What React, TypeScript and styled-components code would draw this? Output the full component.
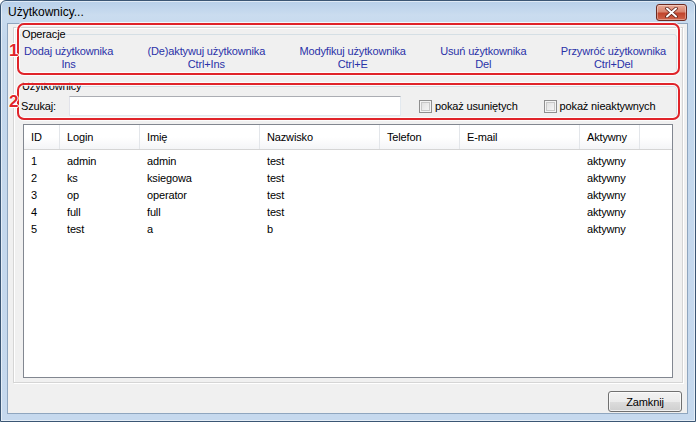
import React from "react";
import styled, { createGlobalStyle } from "styled-components";

const GlobalStyle = createGlobalStyle`
  html, body {
    margin: 0;
    padding: 0;
    background: #fff;
  }
  body {
    font-family: "Liberation Sans", Arial, sans-serif;
    font-size: 11px;
    letter-spacing: -0.15px;
    color: #000;
  }
`;

/* ------------------ Window frame ------------------ */

const Window = styled.div`
  box-sizing: border-box;
  width: 696px;
  height: 422px;
  border: 1px solid #3b5674;
  border-radius: 6px 6px 0 0;
  padding: 0 7px 7px 6px;
  background: linear-gradient(to bottom, #b7cfe9 0px, #cadcef 14px, #c3d7ec 40px, #c6d9ee 100%);
  display: flex;
  flex-direction: column;
  box-shadow: inset 0 0 0 1px rgba(255, 255, 255, 0.55);
`;

const TitleBar = styled.div`
  height: 22px;
  display: flex;
  align-items: flex-start;
  justify-content: space-between;
`;

const Title = styled.span`
  font-family: "Liberation Sans", Arial, sans-serif;
  font-size: 12px;
  letter-spacing: 0;
  line-height: 22px;
  padding-left: 1px;
  color: #000;
`;

const CloseButton = styled.div`
  box-sizing: border-box;
  width: 31px;
  height: 17px;
  margin-top: 3px;
  margin-right: 1px;
  border: 1px solid #6e2a20;
  border-radius: 3px;
  background: linear-gradient(to bottom, #e9a996 0%, #d98670 45%, #c1442c 55%, #d0644a 100%);
  box-shadow: inset 0 0 0 1px rgba(255, 255, 255, 0.35);
  display: flex;
  align-items: center;
  justify-content: center;
`;

const Client = styled.div`
  position: relative;
  flex: 1;
  display: flex;
  flex-direction: column;
  background: #f0f0f0;
  border: 1px solid #8fa6bf;
`;

/* ------------------ Panel and group boxes ------------------ */

const Panel = styled.div`
  flex: 1;
  display: flex;
  flex-direction: column;
  margin: 3px 4px 0 5px;
  padding: 0 5px 4px 5px;
  border: 1px solid #d5d5d5;
  box-shadow: inset 1px 1px 0 #fff, 1px 1px 0 #fff;
`;

const Group = styled.fieldset<{ gap?: number }>`
  margin: ${(p) => p.gap ?? 0}px 0 0 0;
  padding: 0 10px 2px 0;
  border: 1px solid #d5dfe5;
  border-radius: 3px;
  min-width: 0;
`;

const Legend = styled.legend`
  padding: 0 1px;
  margin-left: 1px;
  font-size: 11px;
  line-height: 13px;
  color: #000;
`;

const LinkRow = styled.div`
  display: flex;
  justify-content: space-between;
  padding: 4px 0 0 4px;
`;

const Operation = styled.div`
  display: flex;
  flex-direction: column;
  align-items: center;
  color: #2a32a8;
  line-height: 13px;
  cursor: pointer;
`;

const SearchRow = styled.div`
  display: flex;
  align-items: center;
  height: 20px;
  padding: 3px 0 1px 1px;
`;

const SearchLabel = styled.span`
  width: 48px;
`;

const SearchInput = styled.div`
  box-sizing: border-box;
  width: 332px;
  height: 20px;
  background: #fff;
  border: 1px solid #e3e9ef;
  border-top-color: #abadb3;
  border-left-color: #e2e3ea;
`;

const CheckLabel = styled.label<{ gap: number }>`
  display: flex;
  align-items: center;
  margin-left: ${(p) => p.gap}px;
  gap: 3px;
`;

const CheckBox = styled.span`
  box-sizing: border-box;
  width: 13px;
  height: 13px;
  border: 1px solid #8f8f8f;
  box-shadow: inset 0 0 0 1px #f4f4f4, inset 0 0 0 2px #c8c8c8;
  background-image: linear-gradient(135deg, #dcdcdc, #fbfbfb);
`;

/* ------------------ List view ------------------ */

const COLS = "36px 80px 120px 120px 80px 120px 60px 1fr";

const List = styled.div`
  flex: 1;
  margin: 4px 4px 0 4px;
  background: #fff;
  border: 1px solid #828790;
  display: flex;
  flex-direction: column;
`;

const HeaderRow = styled.div`
  display: grid;
  grid-template-columns: ${COLS};
  height: 24px;
  background: linear-gradient(to bottom, #ffffff 0%, #ffffff 50%, #f4f5f7 100%);
  border-bottom: 1px solid #d5d5d5;
`;

const HeaderCell = styled.div<{ last?: boolean }>`
  display: flex;
  align-items: center;
  padding-left: 7px;
  border-right: ${(p) => (p.last ? "none" : "1px solid #e3e6ea")};
`;

const Body = styled.div`
  padding-top: 2px;
`;

const Row = styled.div`
  display: grid;
  grid-template-columns: ${COLS};
  height: 17px;
  align-items: center;
`;

const Cell = styled.div`
  padding-left: 7px;
  white-space: nowrap;
`;

/* ------------------ Footer ------------------ */

const Footer = styled.div`
  display: flex;
  justify-content: flex-end;
  padding: 8px 5px 1px 0;
`;

const Button = styled.div`
  box-sizing: border-box;
  width: 74px;
  height: 21px;
  border: 1px solid #707070;
  border-radius: 3px;
  background: linear-gradient(to bottom, #f2f2f2 0%, #ebebeb 50%, #dddddd 51%, #cfcfcf 100%);
  box-shadow: inset 0 0 0 1px rgba(255, 255, 255, 0.7);
  display: flex;
  align-items: center;
  justify-content: center;
`;

/* ------------------ Annotations ------------------ */

const Marker = styled.div<{ top: number; height: number }>`
  position: absolute;
  left: 9px;
  top: ${(p) => p.top}px;
  width: 663px;
  height: ${(p) => p.height}px;
  box-sizing: border-box;
  border: 2px solid #e0242a;
  border-radius: 7px;
  box-shadow: 0 0 0 1px rgba(255, 255, 255, 0.8), inset 0 0 0 1px rgba(255, 255, 255, 0.8);
  pointer-events: none;
`;

const MarkerNumber = styled.div<{ top: number }>`
  position: absolute;
  left: 1px;
  top: ${(p) => p.top}px;
  font-family: "Liberation Sans", Arial, sans-serif;
  font-weight: bold;
  font-size: 17px;
  line-height: 17px;
  color: #e0242a;
  text-shadow: 1px 0 0 #fff, -1px 0 0 #fff, 0 1px 0 #fff, 0 -1px 0 #fff;
`;

const operations = [
  ["Dodaj użytkownika", "Ins"],
  ["(De)aktywuj użytkownika", "Ctrl+Ins"],
  ["Modyfikuj użytkownika", "Ctrl+E"],
  ["Usuń użytkownika", "Del"],
  ["Przywróć użytkownika", "Ctrl+Del"],
];

const headers = ["ID", "Login", "Imię", "Nazwisko", "Telefon", "E-mail", "Aktywny"];

const users = [
  ["1", "admin", "admin", "test", "", "", "aktywny"],
  ["2", "ks", "ksiegowa", "test", "", "", "aktywny"],
  ["3", "op", "operator", "test", "", "", "aktywny"],
  ["4", "full", "full", "test", "", "", "aktywny"],
  ["5", "test", "a", "b", "", "", "aktywny"],
];

const App = () => {
  return (
    <>
      <GlobalStyle />
      <Window>
        <TitleBar>
          <Title>Użytkownicy...</Title>
          <CloseButton>
            <svg width="13" height="11" viewBox="0 0 13 11">
              <path
                d="M2 1.5 L11 9.5 M11 1.5 L2 9.5"
                stroke="#5a2018"
                strokeWidth="3.6"
                strokeLinecap="round"
              />
              <path
                d="M2 1.5 L11 9.5 M11 1.5 L2 9.5"
                stroke="#fff"
                strokeWidth="2"
                strokeLinecap="round"
              />
            </svg>
          </CloseButton>
        </TitleBar>
        <Client>
          <Panel>
            <Group>
              <Legend>Operacje</Legend>
              <LinkRow>
                {operations.map(([label, key]) => (
                  <Operation key={label}>
                    <span>{label}</span>
                    <span>{key}</span>
                  </Operation>
                ))}
              </LinkRow>
            </Group>
            <Group gap={6}>
              <Legend>Użytkownicy</Legend>
              <SearchRow>
                <SearchLabel>Szukaj:</SearchLabel>
                <SearchInput />
                <CheckLabel gap={18}>
                  <CheckBox />
                  pokaż usuniętych
                </CheckLabel>
                <CheckLabel gap={26}>
                  <CheckBox />
                  pokaż nieaktywnych
                </CheckLabel>
              </SearchRow>
            </Group>
            <List>
              <HeaderRow>
                {headers.map((h) => (
                  <HeaderCell key={h}>{h}</HeaderCell>
                ))}
                <HeaderCell last />
              </HeaderRow>
              <Body>
                {users.map((u) => (
                  <Row key={u[0]}>
                    {u.map((v, i) => (
                      <Cell key={i}>{v}</Cell>
                    ))}
                  </Row>
                ))}
              </Body>
            </List>
          </Panel>
          <Footer>
            <Button>Zamknij</Button>
          </Footer>
          <Marker top={-1} height={52} />
          <MarkerNumber top={18}>1</MarkerNumber>
          <Marker top={59} height={37} />
          <MarkerNumber top={69}>2</MarkerNumber>
        </Client>
      </Window>
    </>
  );
};

export default App;
